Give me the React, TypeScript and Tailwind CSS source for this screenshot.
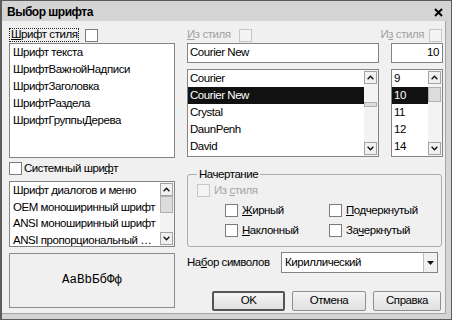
import React from "react";

const Box = ({ off }: { off?: boolean }) => (
  <span
    className={
      off
        ? "block w-[13px] h-[13px] shrink-0 border border-[#c6c6c6] bg-[#f4f4f4]"
        : "block w-[13px] h-[13px] shrink-0 border border-[#7b7b7b] bg-white"
    }
  />
);

const Arrow = ({ up }: { up?: boolean }) => (
  <div className="w-[13px] h-[13px] shrink-0 flex items-center justify-center border border-[#a3a3a3] bg-[#f1f1f1]">
    <svg width="7" height="5" viewBox="0 0 7 5">
      <path
        d={up ? "M0.6 4.2L3.5 1.2L6.4 4.2" : "M0.6 0.8L3.5 3.8L6.4 0.8"}
        fill="none"
        stroke="#111"
        strokeWidth="1.3"
      />
    </svg>
  </div>
);

const ScrollBar = ({ thumb }: { thumb: string }) => (
  <div className="w-[14px] shrink-0 flex flex-col items-end bg-[#f3f3f3] py-px pr-px">
    <Arrow up />
    <div className="flex-1 w-[13px] flex flex-col">
      <div className={thumb} />
    </div>
    <Arrow />
  </div>
);

interface ListProps {
  items: string[];
  selected?: string;
  size: string;
  row: string;
  scroll?: React.ReactNode;
}

const List = ({ items, selected, size, row, scroll }: ListProps) => (
  <div className={`flex border border-[#848484] bg-white overflow-hidden ${size}`}>
    <div className="flex-1 min-w-0 flex flex-col">
      {items.map((it) => (
        <div
          key={it}
          className={`${row} shrink-0 whitespace-nowrap overflow-hidden text-ellipsis ${
            it === selected ? "bg-[#111111] text-white" : ""
          }`}
        >
          {it}
        </div>
      ))}
    </div>
    {scroll}
  </div>
);

const Button = ({ label, main, w }: { label: string; main?: boolean; w: string }) => (
  <button
    className={`${w} h-[20px] rounded-[2px] font-normal bg-gradient-to-b from-[#f4f4f4] to-[#e0e0e0] ${
      main ? "border-2 border-[#555555]" : "border border-[#8e8e8e]"
    }`}
  >
    {label}
  </button>
);

export default function App() {
  return (
    <div className="w-[452px] h-[320px] flex flex-col bg-[#d4d4d4] border-t border-r border-b border-l-2 border-[#5c5c5c] font-[family-name:'Liberation_Sans',Arial,sans-serif] text-[11.5px] tracking-[-0.45px] text-black leading-none">
      {/* title */}
      <div className="h-[20px] shrink-0 flex items-center justify-between pl-[5px] pr-[8px] pt-[2px]">
        <span className="font-bold text-[12px] tracking-[-0.5px]">Выбор шрифта</span>
        <svg width="9" height="9" viewBox="0 0 9 9">
          <path d="M1 1L8 8M8 1L1 8" stroke="#000" strokeWidth="2" />
        </svg>
      </div>

      {/* body */}
      <div className="flex-1 mr-[5px] mb-[5px] bg-[#f0f0f0] border-r border-b border-[#a6a6a6] flex pl-[7px] pt-[7px] gap-[12px]">
        {/* left column */}
        <div className="w-[166px] flex flex-col">
          <div className="h-[14px] flex items-center gap-[6px]">
            <span className="h-[14px] flex items-center border border-dotted border-[#222] px-[1px]">
              <span>
                <u>Ш</u>рифт стиля
              </span>
            </span>
            <Box />
          </div>
          <List
            size="mt-px h-[115px]"
            row="h-[17px] leading-[17px] px-[3px]"
            items={["Шрифт текста", "ШрифтВажнойНадписи", "ШрифтЗаголовка", "ШрифтРаздела", "ШрифтГруппыДерева"]}
          />
          <label className="mt-[4px] h-[13px] flex items-center gap-[2px]">
            <Box />
            <span>
              Системный шри<u>ф</u>т
            </span>
          </label>
          <List
            size="mt-[6px] h-[66px]"
            row="h-[16.5px] leading-[16.5px] pl-[3px] pr-[2px]"
            items={[
              "Шрифт диалогов и меню",
              "OEM моноширинный шрифт",
              "ANSI моноширинный шрифт",
              "ANSI пропорциональный шрифт",
            ]}
            scroll={<ScrollBar thumb="h-[17px] border border-[#b0b0b0] bg-[#dcdcdc]" />}
          />
          <div className="mt-[6px] h-[55px] border border-[#8c8c8c] flex items-center justify-center font-[family-name:'Liberation_Mono','Courier_New',monospace] text-[12.5px] tracking-normal">
            AaBbБбФф
          </div>
        </div>

        {/* right column */}
        <div className="w-[256px] flex flex-col">
          <div className="grid grid-cols-[192px_52px] gap-x-[12px]">
            <div className="h-[14px] flex items-center gap-[8px] text-[#a2a2a2]">
              <span>
                <u>И</u>з стиля
              </span>
              <Box off />
            </div>
            <div className="h-[14px] flex items-center justify-end gap-[5px] text-[#a2a2a2] whitespace-nowrap -ml-[20px] pr-[1px]">
              <span>
                И<u>з</u> стиля
              </span>
              <Box off />
            </div>
            <div className="mt-px h-[20px] border border-[#848484] bg-white flex items-center px-[2px]">
              Courier New
            </div>
            <div className="mt-px h-[20px] border border-[#848484] bg-white flex items-center justify-end px-[3px]">
              10
            </div>
            <List
              size="mt-[6px] h-[88px]"
              row="h-[17px] leading-[17px] px-[2px]"
              selected="Courier New"
              items={["Courier", "Courier New", "Crystal", "DaunPenh", "David"]}
              scroll={<ScrollBar thumb="mt-[18px] h-[5px] border border-[#b0b0b0] bg-[#dcdcdc]" />}
            />
            <List
              size="mt-[6px] h-[88px]"
              row="h-[17px] leading-[17px] px-[2px]"
              selected="10"
              items={["9", "10", "11", "12", "14"]}
              scroll={<ScrollBar thumb="mt-[3px] h-[15px] border border-[#b0b0b0] bg-[#dcdcdc]" />}
            />
          </div>

          <fieldset className="mt-[10px] w-[255px] h-[80px] border border-[#ababab] rounded-[3px] pl-[9px]">
            <legend className="px-[2px] h-[14px] leading-[14px]">Начертание</legend>
            <label className="mt-[3px] h-[13px] flex items-center gap-[4px] text-[#a6a6a6]">
              <Box off />
              <span>
                Из <u>с</u>тиля
              </span>
            </label>
            <div className="mt-[7px] pl-[28px] grid grid-cols-[104px_auto] gap-y-[7px]">
              <label className="h-[13px] flex items-center gap-[4px]">
                <Box />
                <span>
                  <u>Ж</u>ирный
                </span>
              </label>
              <label className="h-[13px] flex items-center gap-[4px]">
                <Box />
                <span>
                  <u>П</u>одчеркнутый
                </span>
              </label>
              <label className="h-[13px] flex items-center gap-[4px]">
                <Box />
                <span>
                  <u>Н</u>аклонный
                </span>
              </label>
              <label className="h-[13px] flex items-center gap-[4px]">
                <Box />
                <span>
                  За<u>ч</u>еркнутый
                </span>
              </label>
            </div>
          </fieldset>

          <div className="mt-[5px] flex items-center">
            <span className="w-[94px]">
              На<u>б</u>ор символов
            </span>
            <div className="w-[157px] h-[21px] border border-[#848484] bg-white flex items-center">
              <span className="flex-1 px-[3px]">Кириллический</span>
              <div className="w-[14px] h-full border-l border-[#bdbdbd] bg-[#f0f0f0] flex items-center justify-center">
                <svg width="7" height="4" viewBox="0 0 7 4">
                  <path d="M0 0H7L3.5 4Z" fill="#111" />
                </svg>
              </div>
            </div>
          </div>

          <div className="mt-[18px] flex gap-[7px] pl-[25px]">
            <Button label="OK" main w="w-[73px]" />
            <Button label="Отмена" w="w-[74px]" />
            <Button label="Справка" w="w-[68px]" />
          </div>
        </div>
      </div>
    </div>
  );
}
